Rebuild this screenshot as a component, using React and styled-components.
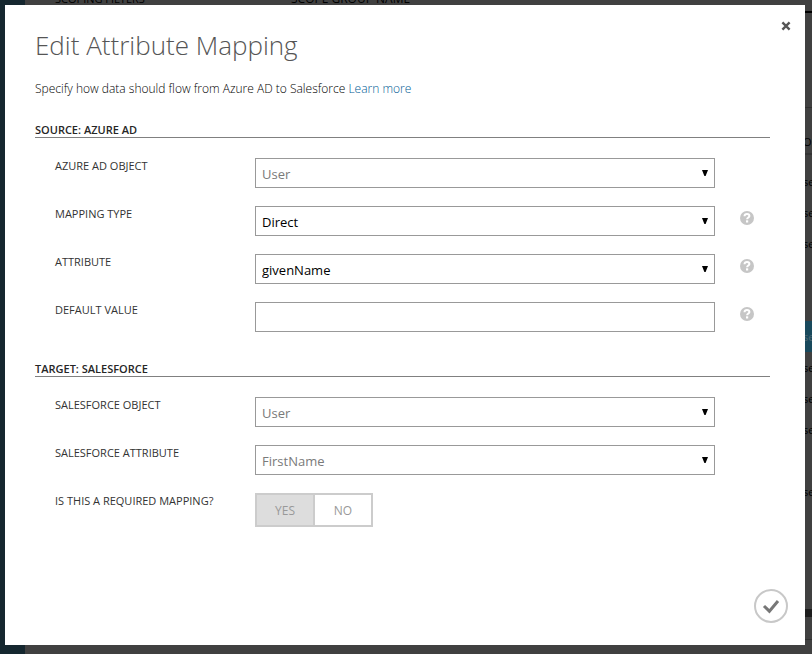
import React, { useState } from "react";
import styled, { createGlobalStyle } from "styled-components";

const GlobalStyle = createGlobalStyle`
  *, *::before, *::after { box-sizing: border-box; }
  body {
    margin: 0;
    background: #404040;
    color: #333;
    font-family: "Open Sans", "Noto Sans", sans-serif;
    font-size: 12px;
  }
`;

/* Dimmed portal page behind the dialog */
const Portal = styled.div`
  display: grid;
  grid-template-columns: 25px minmax(0, 1fr);
  height: 100vh;
  overflow: hidden;
  color: #000;
  font-size: 11px;
`;

const Rail = styled.div`
  background: #15272f;
`;

const PortalMain = styled.main`
  display: flex;
  flex-direction: column;
  background: #404040;
  overflow: hidden;
`;

/* Scrolled almost out of view: only the lower edge of its text shows */
const PortalHeader = styled.div`
  display: grid;
  grid-template-columns: 236px 1fr;
  flex: none;
  height: 14px;
  margin-top: -1px;
  padding-left: 30px;
  line-height: 0;
  border-bottom: 2px solid #000;
`;

const HeaderCell = styled.span`
  font-size: ${(p) => (p.$strong ? 12 : 11)}px;
  font-weight: ${(p) => (p.$strong ? 500 : 400)};
`;

const PortalGap = styled.div`
  flex: none;
  height: ${(p) => p.$size}px;
  border-bottom: ${(p) => p.$line || 0}px solid ${(p) => p.$color || "#303030"};
`;

const PortalRow = styled.div`
  display: flex;
  justify-content: flex-end;
  flex: none;
  height: ${(p) => (p.$head ? 29 : 31)}px;
  line-height: 31px;
  border-bottom: ${(p) => (p.$head ? 2 : 0)}px solid #343434;
  background: ${(p) => (p.$selected ? "#19495c" : "transparent")};
  color: ${(p) => (p.$selected ? "#4d6773" : "#000")};
`;

const PortalCell = styled.span`
  width: 9px;
  overflow: hidden;
  white-space: nowrap;
`;

/* Dialog */
const Overlay = styled.div`
  position: fixed;
  inset: 0;
  display: flex;
  padding: 5px 7px 9px 5px;
`;

const Dialog = styled.section`
  display: flex;
  flex: 1;
  flex-direction: column;
  min-width: 0;
  overflow: auto;
  padding: 0 35px 0 30px;
  background: #fff;
`;

const DialogHeader = styled.header`
  display: flex;
  justify-content: space-between;
  align-items: flex-start;
  margin-right: -23px;
  padding-top: 14px;
`;

const Title = styled.h1`
  margin: 6px 0 0;
  color: #555;
  font-size: 26px;
  font-weight: 300;
  line-height: 40px;
`;

const CloseButton = styled.button`
  display: flex;
  padding: 2px;
  border: 0;
  background: none;
  cursor: pointer;
`;

const Intro = styled.p`
  margin: 14px 0 0;
  color: #000;
  font-weight: 300;
  line-height: 20px;
`;

const Link = styled.a`
  color: #005a94;
  text-decoration: none;
`;

const Group = styled.section`
  margin-top: ${(p) => p.$gap}px;
`;

const GroupTitle = styled.h2`
  margin: 0 0 20px;
  border-bottom: 1px solid #808080;
  color: #262626;
  font-size: 11px;
  font-weight: 600;
  line-height: 15px;
`;

const Rows = styled.div`
  display: grid;
  gap: 18px;
  padding-left: 20px;
`;

const Row = styled.div`
  display: grid;
  grid-template-columns: 200px minmax(0, 1fr) 30px;
`;

const FieldLabel = styled.label`
  font-size: 11px;
  line-height: 16px;
`;

const Control = styled.div`
  position: relative;
  margin-right: 25px;
`;

const boxed = `
  display: block;
  width: 100%;
  height: 30px;
  border: 1px solid #999;
  border-radius: 0;
  background: #fff;
  font-family: inherit;
  font-size: 13px;
`;

const Select = styled.select`
  ${boxed}
  appearance: none;
  padding: 2px 24px 0 6px;
  color: #000;
  opacity: 1;
  &:disabled { color: #7a7a7a; }
`;

const TextInput = styled.input`
  ${boxed}
  padding: 2px 6px 0;
`;

const Arrow = styled.svg`
  position: absolute;
  top: 12px;
  right: 7px;
  pointer-events: none;
`;

const HelpButton = styled.button`
  align-self: start;
  justify-self: start;
  display: flex;
  margin-top: 5px;
  padding: 0;
  border: 0;
  background: none;
  cursor: help;
`;

const Toggle = styled.div`
  display: flex;
  width: 118px;
  height: 34px;
  border: 2px solid #ccc;
`;

const ToggleButton = styled.button`
  flex: 1;
  padding: 0;
  border: 0;
  background: ${(p) => (p.$on ? "#ddd" : "#fff")};
  color: #999;
  font-family: inherit;
  font-size: 12px;
  & + & { border-left: 2px solid #ccc; }
`;

const DialogFooter = styled.footer`
  display: flex;
  justify-content: flex-end;
  margin: auto -18px 0 0;
  padding-bottom: 22px;
`;

const ConfirmButton = styled.button`
  display: flex;
  padding: 0;
  border: 0;
  background: none;
  cursor: pointer;
`;

function HelpIcon() {
  return (
    <svg width="14" height="14" viewBox="0 0 14 14" aria-hidden="true">
      <circle cx="7" cy="7" r="7" fill="#c6c6c6" />
      <path d="M4.5 5.2C4.6 3.7 5.6 3.1 7 3.1c1.5 0 2.4.8 2.4 1.9 0 1.5-2.3 1.6-2.3 3.3" fill="none" stroke="#fff" strokeWidth="2" />
      <rect x="6" y="9.3" width="2.2" height="2.2" fill="#fff" />
    </svg>
  );
}

function Help({ topic }) {
  return (
    <HelpButton type="button" aria-label={`Help: ${topic}`}>
      <HelpIcon />
    </HelpButton>
  );
}

function SelectRow({ id, label, value, disabled, help }) {
  return (
    <Row>
      <FieldLabel htmlFor={id}>{label}</FieldLabel>
      <Control>
        <Select id={id} defaultValue={value} disabled={disabled}>
          <option>{value}</option>
        </Select>
        <Arrow width="6" height="6" viewBox="0 0 6 6" aria-hidden="true">
          <path d="M0 0h6L3.6 6H2.4z" fill="#000" />
        </Arrow>
      </Control>
      {help && <Help topic={label} />}
    </Row>
  );
}

const portalRows = ["se", "se", "se", "", "", "se", "se", "se", "se", "", "se"];

function PortalPage() {
  return (
    <Portal aria-hidden="true">
      <Rail />
      <PortalMain>
        <PortalHeader>
          <HeaderCell>SCOPING FILTERS</HeaderCell>
          <HeaderCell $strong>SCOPE GROUP NAME</HeaderCell>
        </PortalHeader>
        <PortalGap $size={95} $line={1} />
        <PortalGap $size={18} />
        <PortalRow $head>
          <PortalCell>OR</PortalCell>
        </PortalRow>
        <PortalGap $size={11} />
        {portalRows.map((text, i) => (
          <PortalRow key={i} $selected={i === 5}>
            <PortalCell>{text}</PortalCell>
          </PortalRow>
        ))}
        <PortalGap $size={110} $line={8} $color="#1d1d1d" />
        <PortalGap $size={23} $line={1} />
      </PortalMain>
    </Portal>
  );
}

export default function App() {
  const [required, setRequired] = useState(true);
  return (
    <>
      <GlobalStyle />
      <PortalPage />
      <Overlay>
        <Dialog role="dialog" aria-labelledby="dialog-title">
          <DialogHeader>
            <Title id="dialog-title">Edit Attribute Mapping</Title>
            <CloseButton type="button" aria-label="Close">
              <svg width="10" height="10" viewBox="0 0 10 10" aria-hidden="true">
                <path d="M1.4 1.4l7.2 7.2M8.6 1.4L1.4 8.6" stroke="#555" strokeWidth="2.4" />
              </svg>
            </CloseButton>
          </DialogHeader>
          <Intro>
            Specify how data should flow from Azure AD to Salesforce <Link href="#learn-more">Learn more</Link>
          </Intro>

          <Group $gap={23}>
            <GroupTitle>SOURCE: AZURE AD</GroupTitle>
            <Rows>
              <SelectRow id="azure-object" label="AZURE AD OBJECT" value="User" disabled />
              <SelectRow id="mapping-type" label="MAPPING TYPE" value="Direct" help />
              <SelectRow id="attribute" label="ATTRIBUTE" value="givenName" help />
              <Row>
                <FieldLabel htmlFor="default-value">DEFAULT VALUE</FieldLabel>
                <Control>
                  <TextInput id="default-value" type="text" />
                </Control>
                <Help topic="DEFAULT VALUE" />
              </Row>
            </Rows>
          </Group>

          <Group $gap={29}>
            <GroupTitle>TARGET: SALESFORCE</GroupTitle>
            <Rows>
              <SelectRow id="salesforce-object" label="SALESFORCE OBJECT" value="User" disabled />
              <SelectRow id="salesforce-attribute" label="SALESFORCE ATTRIBUTE" value="FirstName" disabled />
              <Row>
                <FieldLabel as="span" id="required-label">IS THIS A REQUIRED MAPPING?</FieldLabel>
                <Toggle role="group" aria-labelledby="required-label">
                  <ToggleButton type="button" $on={required} aria-pressed={required} onClick={() => setRequired(true)}>
                    YES
                  </ToggleButton>
                  <ToggleButton type="button" $on={!required} aria-pressed={!required} onClick={() => setRequired(false)}>
                    NO
                  </ToggleButton>
                </Toggle>
              </Row>
            </Rows>
          </Group>

          <DialogFooter>
            <ConfirmButton type="button" aria-label="Save mapping">
              <svg width="34" height="34" viewBox="0 0 34 34" aria-hidden="true">
                <circle cx="17" cy="17" r="16" fill="#fff" stroke="#c8c8c8" strokeWidth="2" />
                <path d="M10 17l5.4 5.2L24 12" fill="none" stroke="#777" strokeWidth="3" />
              </svg>
            </ConfirmButton>
          </DialogFooter>
        </Dialog>
      </Overlay>
    </>
  );
}
